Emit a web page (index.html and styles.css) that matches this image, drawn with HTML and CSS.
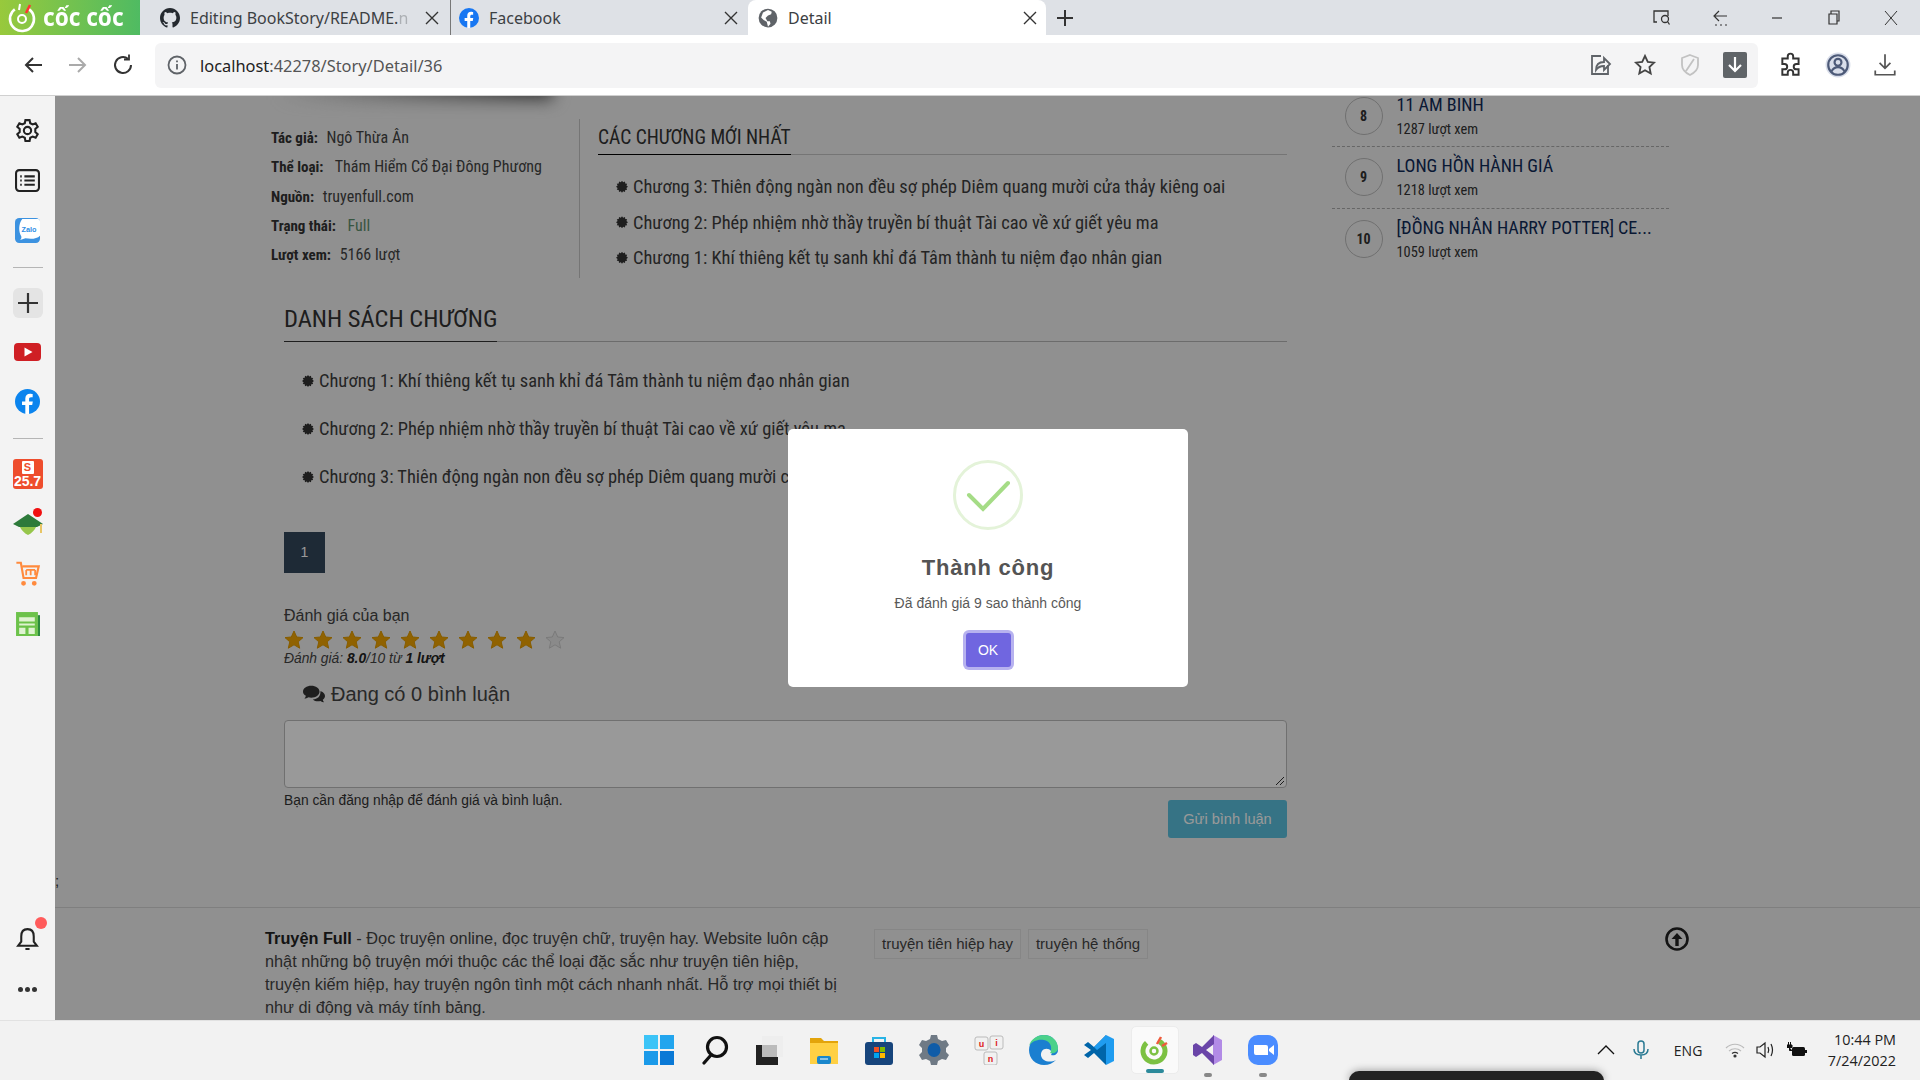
FILE: index.html
```html
<!DOCTYPE html>
<html lang="vi">
<head>
<meta charset="utf-8">
<title>Detail</title>
<link rel="stylesheet" href="styles.css">
</head>
<body>
<div class="tabs">
  <div class="brand">
    <svg class="brand-mark" width="32" height="33" viewBox="0 0 32 33"><circle cx="15" cy="18" r="12" fill="none" stroke="#fff" stroke-width="2.600" stroke-dasharray="60 16" transform="rotate(-55 15 18)"/><circle cx="15" cy="18" r="4" fill="none" stroke="#fff" stroke-width="2"/><path d="M19 12l4-8" stroke="#f33" stroke-width="2.500"/><path d="M12 9l1-6" stroke="#fff" stroke-width="2"/></svg>
    <span class="brand-name">cốc cốc</span>
  </div>
  <div class="tab t1">
    <svg class="fav" viewBox="0 0 16 16"><path fill="#24292f" d="M8 0C3.6 0 0 3.6 0 8c0 3.5 2.3 6.5 5.5 7.6.4.1.5-.2.5-.4v-1.4c-2.2.5-2.7-1-2.7-1-.4-.9-.9-1.2-.9-1.2-.7-.5.1-.5.1-.5.8.1 1.2.8 1.2.8.7 1.2 1.9.9 2.3.7.1-.5.3-.9.5-1.1-1.8-.2-3.6-.9-3.6-4 0-.9.3-1.6.8-2.1-.1-.2-.4-1 .1-2.1 0 0 .7-.2 2.2.8.6-.2 1.3-.3 2-.3s1.4.1 2 .3c1.5-1 2.2-.8 2.2-.8.4 1.1.2 1.9.1 2.1.5.6.8 1.3.8 2.1 0 3.1-1.9 3.7-3.7 3.9.3.3.6.8.6 1.5v2.2c0 .2.1.5.6.4C13.7 14.5 16 11.5 16 8c0-4.400-3.600-8-8-8z"/></svg>
    <span class="tab-title">Editing BookStory/README.<span class="fade">n</span></span>
    <svg class="close" viewBox="0 0 14 14" fill="none" stroke="#333" stroke-width="1.400"><path d="M1 1l12 12M13 1L1 13"/></svg>
  </div>
  <div class="tab t2">
    <svg class="fav" viewBox="0 0 16 16"><circle cx="8" cy="8" r="8" fill="#1877f2"/><path fill="#fff" d="M11 10.300l.4-2.300H9V6.500c0-.7.3-1.200 1.300-1.200h1V3.200S10.400 3 9.600 3C7.800 3 6.600 4.100 6.600 6.100V8H4.500v2.300h2.100V16h2.400v-5.700z"/></svg>
    <span class="tab-title">Facebook</span>
    <svg class="close" viewBox="0 0 14 14" fill="none" stroke="#333" stroke-width="1.400"><path d="M1 1l12 12M13 1L1 13"/></svg>
  </div>
  <div class="tab active">
    <svg class="fav" viewBox="0 0 16 16"><circle cx="8" cy="8" r="7.500" fill="#5f6368"/><path fill="#fff" d="M8 1.500l3 1.500-.5 2-2.500 1-2 2 1.500 2.500h2l.5 2-2 2.500-1-4-2.500-1.500-2-2 1.500-4z"/></svg>
    <span class="tab-title">Detail</span>
    <svg class="close" viewBox="0 0 14 14" fill="none" stroke="#333" stroke-width="1.400"><path d="M1 1l12 12M13 1L1 13"/></svg>
  </div>
  <div class="new-tab"><svg width="16" height="16" viewBox="0 0 16 16" stroke="#333" stroke-width="2"><path d="M8 0v16M0 8h16"/></svg></div>
  <div class="win-ctrls">
    <svg width="22" height="18" viewBox="0 0 22 18" fill="none" stroke="#333" stroke-width="1.300"><path d="M5 13H2V2h14v5"/><circle cx="13" cy="10" r="3.500"/><path d="M15.500 12.500l2 3"/></svg>
    <svg width="22" height="18" viewBox="0 0 22 18" fill="none" stroke="#333" stroke-width="1.200"><path d="M18 7H6M10 2L5 7l5 5M6 16h2M11 16h2M16 16h2"/></svg>
    <svg width="22" height="18" viewBox="0 0 22 18" fill="none" stroke="#333" stroke-width="1.200"><path d="M6 9h10"/></svg>
    <svg width="22" height="18" viewBox="0 0 22 18" fill="none" stroke="#333" stroke-width="1.200"><path d="M6 5h8v10H6zM8 5V2h8v10h-2"/></svg>
    <svg width="22" height="18" viewBox="0 0 22 18" fill="none" stroke="#333" stroke-width="1"><path d="M5 2l12 14M17 2L5 16"/></svg>
  </div>
</div>

<div class="toolbar">
  <svg class="nav" viewBox="0 0 24 24" fill="none" stroke="#333" stroke-width="2"><path d="M21 12H5M12 5l-7 7 7 7"/></svg>
  <svg class="nav" viewBox="0 0 24 24" fill="none" stroke="#aaa" stroke-width="2"><path d="M3 12h16M12 5l7 7-7 7"/></svg>
  <svg class="nav" viewBox="0 0 24 24" fill="none" stroke="#333" stroke-width="2"><path d="M20 12a8 8 0 1 1-3-6.200"/><path d="M18 1.500v5h-5" stroke-width="1.800"/></svg>
  <div class="omnibox">
    <svg class="info-i" viewBox="0 0 20 20" fill="none" stroke="#5f6368" stroke-width="1.800"><circle cx="10" cy="10" r="8.500"/><path d="M10 9v5.500M10 5.500v1.800"/></svg>
    <span class="url"><span class="host">localhost</span>:42278/Story/Detail/36</span>
    <div class="omni-icons">
      <svg class="oi" viewBox="0 0 24 24" fill="none" stroke="#5f6368" stroke-width="1.800"><path d="M13 3H4v18h16v-9"/><path d="M8 17c0-5 3-8 8-8V5l6 6-6 6v-4c-3 0-6 1-8 4z"/></svg>
      <svg class="oi" viewBox="0 0 24 24" fill="none" stroke="#444" stroke-width="1.800"><path d="M12 3l2.800 6 6.200.7-4.600 4.300 1.300 6.500L12 17.200 6.300 20.500l1.300-6.500L3 9.700 9.200 9z"/></svg>
      <svg class="oi" viewBox="0 0 24 24" fill="none" stroke="#c2c2c2" stroke-width="1.800"><path d="M12 2l8 3v7c0 5-4 8-8 10-4-2-8-5-8-10V5zM8 18L16 6"/></svg>
      <div class="dl-box"><svg width="16" height="18" viewBox="0 0 16 18" fill="none" stroke="#fff" stroke-width="2.200"><path d="M8 1v14M2 9l6 6 6-6"/></svg></div>
    </div>
  </div>
  <div class="tool-icons">
    <svg class="ti" viewBox="0 0 24 24" fill="none" stroke="#333" stroke-width="1.800"><path d="M9 4a2.500 2.500 0 0 1 5 0v2h5v5h-2a2.500 2.500 0 0 0 0 5h2v5h-5v-2a2.500 2.500 0 0 0-5 0v2H4v-5h2a2.500 2.500 0 0 0 0-5H4V6h5z"/></svg>
    <svg class="ti" viewBox="0 0 24 24" fill="none"><circle cx="12" cy="12" r="11.500" fill="#d9deea"/><circle cx="12" cy="12" r="9" stroke="#4d5a78" stroke-width="2"/><circle cx="12" cy="9.500" r="3.200" stroke="#4d5a78" stroke-width="2"/><path d="M6 18c1.500-3 3.500-4 6-4s4.500 1 6 4" stroke="#4d5a78" stroke-width="2"/></svg>
    <svg class="ti" viewBox="0 0 24 24" fill="none" stroke="#555" stroke-width="1.600"><path d="M12 2v13M7 10l5 5 5-5M3 17v4h18v-4"/></svg>
  </div>
</div>

<div class="workspace">
  <aside class="side">
    <div class="side-top">
      <svg class="si" viewBox="0 0 24 24" fill="none" stroke="#222" stroke-width="2"><circle cx="12" cy="12" r="3.500"/><path d="M10 2h4l.6 3 2.400 1.200 2.800-1.200 2 3.500-2.300 2v3l2.300 2-2 3.500-2.800-1.200-2.400 1.200-.6 3h-4l-.6-3L7 17.800 4.200 19l-2-3.500 2.300-2v-3l-2.300-2 2-3.500L7 6.200 9.400 5z"/></svg>
      <svg class="si" viewBox="0 0 24 24" fill="none" stroke="#222" stroke-width="2"><rect x="1" y="2" width="22" height="20" rx="3"/><path d="M9 8h10M9 12h10M9 16h10M5 8h1.500M5 12h1.500M5 16h1.500"/></svg>
      <svg class="si" viewBox="0 0 24 24"><rect width="24" height="24" rx="4" fill="#3c92e0"/><path fill="#fff" d="M7 1h15a2 2 0 0 1 2 2v14c-3 3-8 3.500-14 2.500L5 21c1-1 1.400-2.200 1-3.500C3.500 13.500 3 6 7 1z"/><text class="zalo" x="13.500" y="13.500" text-anchor="middle">Zalo</text></svg>
      <hr class="sep">
      <div class="plus"><svg width="22" height="22" viewBox="0 0 22 22" stroke="#333" stroke-width="2.200"><path d="M11 1v20M1 11h20"/></svg></div>
      <svg class="yt" viewBox="0 0 27 18"><rect width="27" height="18" rx="4" fill="#cf1f24"/><path d="M10.500 4.500l8 4.500-8 4.500z" fill="#fff"/></svg>
      <svg class="si" viewBox="0 0 16 16"><circle cx="8" cy="8" r="8" fill="#0b84ee"/><path fill="#fff" d="M11 10.300l.4-2.300H9V6.500c0-.7.3-1.200 1.300-1.200h1V3.200S10.400 3 9.600 3C7.800 3 6.600 4.100 6.600 6.100V8H4.500v2.300h2.100V16h2.400v-5.700z"/></svg>
      <hr class="sep">
      <div class="shopee"><span class="shopee-s">S</span><span class="shopee-n">25.7</span></div>
      <div class="hat">
        <svg class="hat-i" viewBox="0 0 30 26"><path d="M6 13c0 0 1 7 9 11 8-4 9-11 9-11z" fill="#96c64b"/><path d="M15 3L0 13l6 3h18l6-3z" fill="#2d7a3a"/><path d="M28 13v9" stroke="#e8c565" stroke-width="2"/></svg>
        <span class="red-dot"></span>
      </div>
      <svg class="cart" viewBox="0 0 28 28" fill="none" stroke="#ff8a3d" stroke-width="2.400"><path d="M1 2h5l3 17h14l3-13H8"/><path d="M12 16v-6M17 16v-6M22 16v-6M12 10h10" stroke-width="2"/><circle cx="9" cy="25" r="1.500" fill="#ff8a3d"/><circle cx="21" cy="25" r="1.500" fill="#ff8a3d"/></svg>
      <svg class="si" viewBox="0 0 24 24"><rect x="1" y="1" width="21" height="23" fill="#6cc24a"/><rect x="22" y="4" width="2" height="20" fill="#2b8a3e"/><path d="M4 6h15v4H4zM4 12h15v2H4zM4 16h6v6H4zM13 16h6v6h-6z" fill="#dff3d2"/></svg>
    </div>
    <div class="side-bottom">
      <div class="bell">
        <svg class="si" viewBox="0 0 24 24" fill="none" stroke="#222" stroke-width="2"><path d="M12 3c-4 0-6 3-6 7v5l-3 4h18l-3-4v-5c0-4-2-7-6-7zM10 22h4"/></svg>
        <span class="bell-dot"></span>
      </div>
      <div class="dots"><i></i><i></i><i></i></div>
    </div>
  </aside>

  <main class="page">
    <div class="cover-shadow"></div>
    <div class="page-body">
      <div class="content-row">
        <div class="col-main">
          <div class="detail-row">
            <div class="info">
              <p><b>Tác giả:</b> Ngô Thừa Ân</p>
              <p><b class="roomy">Thể loại:</b> Thám Hiểm Cổ Đại Đông Phương</p>
              <p><b>Nguồn:</b> truyenfull.com</p>
              <p><b class="roomy">Trạng thái:</b> <span class="full">Full</span></p>
              <p><b>Lượt xem:</b> 5166 lượt</p>
            </div>
            <div class="latest">
              <div class="head-small"><span>CÁC CHƯƠNG MỚI NHẤT</span></div>
              <ul class="ch-list tight">
                <li>Chương 3: Thiên động ngàn non đều sợ phép Diêm quang mười cửa thảy kiêng oai</li>
                <li>Chương 2: Phép nhiệm nhờ thầy truyền bí thuật Tài cao về xứ giết yêu ma</li>
                <li>Chương 1: Khí thiêng kết tụ sanh khỉ đá Tâm thành tu niệm đạo nhân gian</li>
              </ul>
            </div>
          </div>
          <div class="chapters">
            <div class="head-big"><span>DANH SÁCH CHƯƠNG</span></div>
            <ul class="ch-list wide">
              <li>Chương 1: Khí thiêng kết tụ sanh khỉ đá Tâm thành tu niệm đạo nhân gian</li>
              <li>Chương 2: Phép nhiệm nhờ thầy truyền bí thuật Tài cao về xứ giết yêu ma</li>
              <li>Chương 3: Thiên động ngàn non đều sợ phép Diêm quang mười cửa thảy kiêng oai</li>
            </ul>
            <div class="pager">1</div>
            <div class="rate-label">Đánh giá của bạn</div>
            <div class="stars">
              <svg class="star" viewBox="0 0 20 20"><path d="M10 1l2.700 6 6.300.6-4.800 4.200 1.500 6.400L10 14.800l-5.700 3.400 1.500-6.400L1 7.600 7.300 7z"/></svg>
              <svg class="star" viewBox="0 0 20 20"><path d="M10 1l2.700 6 6.300.6-4.800 4.200 1.500 6.400L10 14.800l-5.700 3.400 1.500-6.400L1 7.600 7.300 7z"/></svg>
              <svg class="star" viewBox="0 0 20 20"><path d="M10 1l2.700 6 6.300.6-4.800 4.200 1.500 6.400L10 14.800l-5.700 3.400 1.500-6.400L1 7.600 7.300 7z"/></svg>
              <svg class="star" viewBox="0 0 20 20"><path d="M10 1l2.700 6 6.300.6-4.800 4.200 1.500 6.400L10 14.800l-5.700 3.400 1.500-6.400L1 7.600 7.300 7z"/></svg>
              <svg class="star" viewBox="0 0 20 20"><path d="M10 1l2.700 6 6.300.6-4.800 4.200 1.500 6.400L10 14.800l-5.700 3.400 1.500-6.400L1 7.600 7.300 7z"/></svg>
              <svg class="star" viewBox="0 0 20 20"><path d="M10 1l2.700 6 6.300.6-4.800 4.200 1.500 6.400L10 14.800l-5.700 3.400 1.500-6.400L1 7.600 7.300 7z"/></svg>
              <svg class="star" viewBox="0 0 20 20"><path d="M10 1l2.700 6 6.300.6-4.800 4.200 1.500 6.400L10 14.800l-5.700 3.400 1.500-6.400L1 7.600 7.300 7z"/></svg>
              <svg class="star" viewBox="0 0 20 20"><path d="M10 1l2.700 6 6.300.6-4.800 4.200 1.500 6.400L10 14.800l-5.700 3.400 1.500-6.400L1 7.600 7.300 7z"/></svg>
              <svg class="star" viewBox="0 0 20 20"><path d="M10 1l2.700 6 6.300.6-4.800 4.200 1.500 6.400L10 14.800l-5.700 3.400 1.500-6.400L1 7.600 7.300 7z"/></svg>
              <svg class="star off" viewBox="0 0 20 20"><path d="M10 1l2.700 6 6.300.6-4.800 4.200 1.500 6.400L10 14.800l-5.700 3.400 1.500-6.400L1 7.600 7.300 7z"/></svg>
            </div>
            <div class="rate-text">Đánh giá: <b>8.0</b>/10 từ <b>1 lượt</b></div>
            <div class="comment-count">
              <svg class="cm-icon" viewBox="0 0 24 20"><path fill="#333" d="M9 1c5 0 9 2.800 9 6.500S14 14 9 14c-1 0-2-.1-3-.4C4.600 14.600 3 15 1.500 15c1-1 1.500-2 1.600-3C1.200 10.800 0 9.300 0 7.500 0 3.800 4 1 9 1z"/><path fill="#333" d="M19.500 7c2.700 1 4.500 3 4.500 5.200 0 1.600-.9 3-2.400 4 .1 1 .6 1.900 1.400 2.800-1.400 0-2.800-.4-4-1.300-.9.200-1.700.3-2.500.3-2.400 0-4.500-.8-5.800-2.100 5 0 8.800-3.600 8.300-8.900z"/></svg>
              <span>Đang có 0 bình luận</span>
            </div>
            <div class="textarea"><svg class="grip" width="10" height="10" viewBox="0 0 10 10" stroke="#333" stroke-width="1"><path d="M1 9l8-8M5 9l4-4"/></svg></div>
            <div class="form-foot">
              <span class="login-note">Bạn cần đăng nhập để đánh giá và bình luận.</span>
              <span class="send">Gửi bình luận</span>
            </div>
          </div>
        </div>
        <div class="col-side">
          <div class="rank"><span class="num">8</span><div class="rank-text"><span class="rank-name">11 AM BINH</span><span class="rank-views">1287 lượt xem</span></div></div>
          <div class="rank"><span class="num">9</span><div class="rank-text"><span class="rank-name">LONG HỒN HÀNH GIÁ</span><span class="rank-views">1218 lượt xem</span></div></div>
          <div class="rank last"><span class="num">10</span><div class="rank-text"><span class="rank-name">[ĐỒNG NHÂN HARRY POTTER] CE...</span><span class="rank-views">1059 lượt xem</span></div></div>
        </div>
      </div>
      <div class="semi">;</div>
      <footer class="foot">
        <p class="foot-text"><b>Truyện Full</b> - Đọc truyện online, đọc truyện chữ, truyện hay. Website luôn cập nhật những bộ truyện mới thuộc các thể loại đặc sắc như truyện tiên hiệp, truyện kiếm hiệp, hay truyện ngôn tình một cách nhanh nhất. Hỗ trợ mọi thiết bị như di động và máy tính bảng.</p>
        <div class="tags"><span class="tag">truyện tiên hiệp hay</span><span class="tag">truyện hệ thống</span></div>
        <svg class="up" viewBox="0 0 24 24" fill="none" stroke="#222" stroke-width="2.600"><circle cx="12" cy="12" r="10.500"/><path d="M12 19v-8" stroke-width="3.400"/><path d="M6.500 12L12 6l5.500 6z" fill="#222" stroke="none"/></svg>
      </footer>
    </div>
    <div class="overlay"></div>
    <div class="dialog">
      <svg class="check" width="70" height="70" viewBox="0 0 70 70" fill="none"><circle cx="35" cy="35" r="33.500" stroke="#e4f3d9" stroke-width="3"/><path d="M16 35l14 14 25-26" stroke="#a5dc86" stroke-width="4" stroke-linecap="round"/></svg>
      <h2 class="dlg-title">Thành công</h2>
      <p class="dlg-text">Đã đánh giá 9 sao thành công</p>
      <span class="ok">OK</span>
    </div>
  </main>
</div>

<div class="taskbar">
  <div class="task-icons">
    <svg class="app" viewBox="0 0 30 30"><path fill="#3cc4f7" d="M0 0h14v14H0z"/><path fill="#22a5ee" d="M16 0h14v14H16z"/><path fill="#1b9ae9" d="M0 16h14v14H0z"/><path fill="#0a79d6" d="M16 16h14v14H16z"/></svg>
    <svg class="app" viewBox="0 0 30 30" fill="none" stroke="#111" stroke-width="3.200"><circle cx="18" cy="12" r="9.500"/><path d="M12 20l-7 8" stroke-linecap="round"/></svg>
    <svg class="app" viewBox="0 0 30 30"><rect x="2" y="10" width="22" height="20" fill="#222"/><rect x="8" y="1" width="21" height="21" fill="#eee"/><rect x="8" y="10" width="15" height="12" fill="#bbb"/></svg>
    <svg class="app" viewBox="0 0 30 30"><path fill="#e3a40b" d="M1 3h11l3 3h14v6H1z"/><path fill="#ffd043" d="M1 8h28v21H1z"/><rect x="8" y="21" width="14" height="8" rx="2" fill="#1a87cc"/><path d="M11 24h8" stroke="#fff"/></svg>
    <svg class="app" viewBox="0 0 30 30"><path d="M9 7V3h12v4" fill="none" stroke="#28b4e6" stroke-width="2"/><rect x="1" y="7" width="28" height="23" rx="3" fill="#17457c"/><path fill="#f25022" d="M10 12h5v5h-5z"/><path fill="#7fba00" d="M16 12h5v5h-5z"/><path fill="#00a4ef" d="M10 18h5v5h-5z"/><path fill="#ffb900" d="M16 18h5v5h-5z"/></svg>
    <svg class="app" viewBox="0 0 30 30"><path fill="#6f7a85" d="M12 0h6l1 4 4 2 4-1 3 5-3 3v4l3 3-3 5-4-1-4 2-1 4h-6l-1-4-4-2-4 1-3-5 3-3v-4L0 10l3-5 4 1 4-2z"/><ellipse cx="15" cy="15" rx="6.500" ry="7" fill="#0f5ca8"/></svg>
    <svg class="app" viewBox="0 0 30 30"><g fill="#f1f1f1" stroke="#bbb"><rect x="1" y="2" width="13" height="13" rx="2"/><rect x="16" y="1" width="13" height="13" rx="2"/><rect x="10" y="17" width="13" height="13" rx="2"/></g><g class="uin"><text x="7.500" y="12">u</text><text x="22.500" y="11">i</text><text x="16.500" y="27">n</text></g></svg>
    <svg class="app" viewBox="0 0 30 30"><path fill="#1b7fd0" d="M15 0a15 15 0 0 0-15 15c0 8.500 6.500 15 15 15 5 0 9-2 12-5-4 2-9 2-12 0-3-2-4-6-2-9 2-3 7-3 9 0 1 1 1 3 0 4 4 1 7-1 7-5C29 6 23 0 15 0z"/><path fill="#4bd18a" d="M15 0C8 0 2 4 0 11c3-5 9-7 15-6 5 1 8 5 7 10 0 1 0 2-1 3 4 1 8-1 8-5C29 6 23 0 15 0z"/></svg>
    <svg class="app" viewBox="0 0 30 30"><path fill="#0065a9" d="M22 0L10 12 4 7 0 10l7 5-7 5 4 3 6-5 12 12z"/><path fill="#1f9cf0" d="M22 0l8 4v22l-8 4V8l-9 7-3-3z"/></svg>
    <div class="active-app"><svg class="app" viewBox="0 0 30 30" fill="none"><circle cx="14" cy="16" r="11" stroke="#7cc142" stroke-width="5" stroke-dasharray="55 14" transform="rotate(-60 14 16)"/><circle cx="14" cy="16" r="3.500" stroke="#7cc142" stroke-width="2.500"/><path d="M17 9l4-7M22 11l5-3" stroke="#ef5a3c" stroke-width="2.500"/></svg><i class="bar"></i></div>
    <div class="running"><svg class="app" viewBox="0 0 30 30"><path fill="#b28be6" d="M20 0l9 5v20l-9 5z"/><path fill="#6a45a8" d="M21 0L9 12 3 8 0 10v10l3 2 6-4 12 12v-9l-8-6 8-6z"/></svg><i class="pip"></i></div>
    <div class="running"><svg class="app" viewBox="0 0 30 30"><rect width="30" height="30" rx="10" fill="#4a8cff"/><path fill="#fff" d="M6 10h12a2 2 0 0 1 2 2v8H8a2 2 0 0 1-2-2zM21 14l5-4v10l-5-4z"/></svg><i class="pip"></i></div>
  </div>
  <div class="tray">
    <svg class="t-i caret" viewBox="0 0 20 20" fill="none" stroke="#111" stroke-width="1.300"><path d="M2 14l8-8 8 8"/></svg>
    <svg class="t-i" viewBox="0 0 20 20" fill="none" stroke="#2a7a93" stroke-width="1.500"><rect x="7" y="1" width="6" height="12" rx="3"/><path d="M3 9c0 4 3 6 7 6s7-2 7-6M10 15v4"/></svg>
    <span class="lang">ENG</span>
    <svg class="t-i wifi" viewBox="0 0 20 20" fill="none" stroke="#333" stroke-width="1.200"><path d="M1 8c5-5 13-5 18 0M4 11c3.500-3 8.500-3 12 0" stroke="#bbb"/><path d="M7 13.500c2-1.500 4-1.500 6 0"/><circle cx="10" cy="16" r="1" fill="#111"/></svg>
    <svg class="t-i" viewBox="0 0 20 20" fill="none" stroke="#222" stroke-width="1.200"><path d="M2 7h3l5-4v14l-5-4H2zM13 7c1 2 1 4 0 6M16 4c2 4 2 8 0 12"/></svg>
    <svg class="t-i" viewBox="0 0 20 20"><rect x="5" y="7" width="13" height="9" rx="1.500" fill="#111"/><path d="M18 10h2v3h-2z" fill="#111"/><path d="M1.500 2v3M3.500 2v3M0 5h5v2.500H0zM2.500 7.500v3h3" stroke="#111" fill="#111"/></svg>
    <div class="clock"><span>10:44 PM</span><span>7/24/2022</span></div>
  </div>
  <div class="peek"></div>
</div>
</body>
</html>
```
FILE: styles.css
```css
* { box-sizing: border-box; }
html, body { margin: 0; height: 100%; }
body { width: 1920px; height: 1080px; overflow: hidden; display: flex; flex-direction: column; background: #fff; font-family: "Liberation Sans", Arial, sans-serif; color: #333; }

.tabs { height: 35px; flex: none; display: flex; background: #dee1e6; font-family: "Noto Sans", sans-serif; }
.brand { width: 140px; height: 35px; padding-left: 7px; display: flex; align-items: center; background: linear-gradient(90deg, #98c93c, #4fbb62); color: #fff; overflow: hidden; }
.brand-mark { flex: none; margin-right: 4px; }
.brand-name { font: 700 24.500px/1 "Noto Sans", sans-serif; transform: scaleX(.92); transform-origin: left; white-space: nowrap; }
.tab { height: 35px; display: flex; align-items: center; font-size: 16px; color: #3c4043; }
.t1 { width: 310px; padding: 0 11px 0 20px; }
.t2 { width: 298px; padding: 0 10px 0 8px; border-left: 1px solid #777; }
.active { width: 298px; padding: 0 9px 0 10px; background: #fff; border-radius: 8px 8px 0 0; }
.fav { width: 20px; height: 20px; flex: none; margin-right: 10px; }
.tab-title { white-space: nowrap; flex: 1; overflow: hidden; }
.fade { opacity: .3; }
.close { width: 14px; height: 14px; flex: none; }
.new-tab { width: 36px; display: flex; align-items: center; justify-content: center; padding-left: 2px; }
.win-ctrls { margin-left: auto; display: flex; gap: 35px; align-items: center; padding-right: 18px; }

.toolbar { height: 61px; flex: none; display: flex; align-items: center; padding: 0 22px 0 21px; background: #fff; border-bottom: 1px solid #d0d0d0; }
.nav { width: 24px; height: 24px; margin-right: 21px; flex: none; }
.nav:nth-child(3) { margin-right: 20px; }
.omnibox { width: 1603px; height: 45px; flex: none; display: flex; align-items: center; padding: 0 11px 0 12px; background: #f4f4f5; border-radius: 6px; }
.info-i { width: 20px; height: 20px; flex: none; margin-right: 13px; }
.url { font: 400 16.400px "Noto Sans", sans-serif; color: #555; }
.host { color: #222; }
.omni-icons { margin-left: auto; display: flex; align-items: center; gap: 21px; }
.oi { width: 24px; height: 24px; }
.dl-box { width: 24px; height: 26px; background: #606468; border-radius: 2px; display: flex; align-items: center; justify-content: center; }
.tool-icons { margin-left: auto; display: flex; gap: 21px; }
.ti { width: 26px; height: 26px; }

.workspace { flex: 1; min-height: 0; display: flex; }
.side { width: 55px; flex: none; background: #f3f3f3; display: flex; flex-direction: column; justify-content: space-between; padding: 22px 0 28px; }
.side-top { display: flex; flex-direction: column; align-items: center; gap: 25px; }
.side-bottom { display: flex; flex-direction: column; align-items: center; gap: 36px; }
.si { width: 25px; height: 25px; display: block; }
.yt { width: 27px; height: 18px; display: block; margin: 3px 0; }
.zalo { font: 700 7px "Liberation Sans", sans-serif; fill: #2f8ee5; }
.uin { font: 700 9px "Liberation Sans", sans-serif; fill: #d22; text-anchor: middle; }
.sep { width: 30px; height: 1px; margin: -1px 0; border: 0; background: #b5b5b5; }
.plus { width: 30px; height: 30px; margin: -4px 0 -3px; background: #e4e4e4; border-radius: 6px; display: flex; align-items: center; justify-content: center; }
.shopee { width: 30px; height: 30px; margin: -4px 0 -3px; background: #ee4d2d; border-radius: 3px; color: #fff; display: flex; flex-direction: column; align-items: center; font-weight: 700; line-height: 1; overflow: hidden; }
.shopee-s { width: 12px; height: 13px; margin-top: 2px; background: #fff; color: #ee4d2d; font-size: 11px; line-height: 13px; text-align: center; border-radius: 1px; }
.shopee-n { font-size: 14px; white-space: nowrap; }
.hat { position: relative; height: 25px; }
.hat-i { width: 30px; height: 26px; display: block; }
.cart { width: 28px; height: 25px; display: block; }
.red-dot { position: absolute; right: 1px; top: -3px; width: 9px; height: 9px; border-radius: 50%; background: #f01010; }
.bell { position: relative; }
.bell-dot { position: absolute; right: -7px; top: -9px; width: 12px; height: 12px; border-radius: 50%; background: #ff5b5b; }
.dots { display: flex; gap: 2px; }
.dots i { width: 5px; height: 5px; border-radius: 50%; background: #333; }

.page { flex: 1; min-width: 0; position: relative; overflow: hidden; background: #f0f0f0; }
.cover-shadow { position: absolute; left: 222px; top: -20px; width: 276px; height: 24px; background: linear-gradient(90deg, transparent, #aaa 45%, #666 90%); filter: blur(8px); }
.page-body { height: 100%; display: flex; flex-direction: column; font-family: Roboto, sans-serif; }
.content-row { display: flex; padding-left: 217px; height: 767px; }
.col-main { width: 1015px; flex: none; padding-top: 23px; font-stretch: condensed; }
.detail-row { display: flex; height: 159px; }
.info { width: 308px; height: 159px; flex: none; padding-top: 4px; border-right: 1px solid #c4c4c4; font-size: 16px; }
.info p { margin: 0 0 0 -1px; height: 29.300px; line-height: 29.300px; color: #444; white-space: nowrap; }
.info b { font-size: 15px; color: #333; margin-right: 5px; }
.info b.roomy { margin-right: 8px; }
.full { color: #5c8e6c; }
.latest { flex: 1; padding-left: 18px; }
.head-small { height: 36px; border-bottom: 1px solid #c4c4c4; font-size: 19.500px; line-height: 37px; color: #333; }
.head-small span { display: inline-block; height: 36px; border-bottom: 1px solid #000; }
.ch-list { list-style: none; margin: 0; padding: 0; }
.ch-list li { white-space: nowrap; position: relative; font-size: 18.400px; color: #3d3d3d; }
.ch-list li::before { content: ""; position: absolute; left: -17px; top: 50%; width: 12px; height: 12px; margin-top: -6px; background: #333; clip-path: polygon(50% 0, 59.800% 13.300%, 75% 6.700%, 76.900% 23.100%, 93.300% 25%, 86.700% 40.200%, 100% 50%, 86.700% 59.800%, 93.300% 75%, 76.900% 76.900%, 75% 93.300%, 59.800% 86.700%, 50% 100%, 40.200% 86.700%, 25% 93.300%, 23.100% 76.900%, 6.700% 75%, 13.300% 59.800%, 0 50%, 13.300% 40.200%, 6.700% 25%, 23.100% 23.100%, 25% 6.700%, 40.200% 13.300%); }
.tight { padding: 14px 0 0 35px; }
.tight li { height: 35.500px; line-height: 35.500px; }
.chapters { margin-left: 12px; padding-top: 23px; }
.head-big { height: 41px; border-bottom: 1px solid #b4b4b4; font-size: 24.500px; line-height: 35px; color: #333; }
.head-big span { display: inline-block; height: 41px; border-bottom: 1px solid #333; }
.wide { padding: 15px 0 0 35px; }
.wide li { height: 48px; line-height: 48px; font-size: 18.450px; }
.pager { width: 41px; height: 41px; margin-top: 31px; background: #33475b; color: #fff; font: 400 14px/41px "Liberation Sans", sans-serif; text-align: center; }
.rate-label { margin-top: 34px; font: 400 16px/18px "Liberation Sans", sans-serif; color: #444; }
.stars { display: flex; gap: 9px; margin-top: 5px; height: 20px; }
.star { width: 20px; height: 20px; fill: #f0a400; stroke: #e09a00; flex: none; }
.star.off { fill: #e6e6e6; stroke: #ccc; }
.rate-text { font: italic 400 13.800px/16px "Liberation Sans", sans-serif; color: #444; margin-top: 1px; }
.rate-text b { color: #222; }
.comment-count { display: flex; align-items: center; gap: 6px; padding-left: 19px; margin-top: 13.500px; height: 26px; font: 400 20px/26px "Liberation Sans", sans-serif; color: #444; }
.cm-icon { width: 22px; height: 20px; }
.textarea { position: relative; height: 68px; margin-top: 13px; background: #fff; border: 1px solid #bbb; border-radius: 4px; }
.grip { position: absolute; right: 1px; bottom: 1px; }
.form-foot { display: flex; justify-content: space-between; align-items: flex-start; margin-top: 4px; }
.login-note { font: 400 13.800px/18px "Liberation Sans", sans-serif; color: #333; }
.send { margin-top: 8px; width: 119px; height: 38px; background: #5bc0de; color: #fff; border-radius: 3px; font: 400 14.600px/38px "Liberation Sans", sans-serif; text-align: center; }
.col-side { width: 337px; margin-left: 44.500px; font-stretch: condensed; margin-top: -10.500px; }
.rank { display: flex; align-items: center; height: 61.500px; border-bottom: 1px dashed #aaa; padding-left: 13px; gap: 14px; }
.rank.last { border-bottom: 0; }
.num { width: 38px; height: 38px; flex: none; border: 1px solid #bbb; border-radius: 50%; font: 700 14px/36px Roboto, sans-serif; font-stretch: condensed; text-align: center; color: #333; }
.rank-text { display: flex; flex-direction: column; padding-top: 2px; }
.rank-name { font-size: 18.100px; line-height: 26px; color: #0f2a57; white-space: nowrap; }
.rank-views { font-size: 14.400px; line-height: 24px; color: #333; }
.semi { height: 44px; flex: none; padding-top: 8px; color: #333; font: 400 15px/20px "Liberation Sans", sans-serif; }
.foot { flex: 1; border-top: 1px solid #d4d4d4; display: flex; align-items: flex-start; padding: 19px 0 0 210px; }
.foot-text { width: 575px; margin: 0; font: 400 16.300px/23px "Liberation Sans", sans-serif; color: #444; flex: none; }
.foot-text b { color: #222; }
.tags { margin-left: 34px; display: flex; gap: 7px; margin-top: 2px; }
.tag { height: 30px; padding: 0 7px; border: 1px solid #e0e0e0; font: 400 15px/28px "Liberation Sans", sans-serif; color: #444; white-space: nowrap; }
.up { width: 24px; height: 24px; position: absolute; left: 1610px; top: 831px; }

.overlay { position: absolute; inset: 0; background: rgba(0,0,0,.4); }
.dialog { position: absolute; left: 733px; top: 333px; width: 400px; height: 258px; background: #fff; border-radius: 5px; display: flex; flex-direction: column; align-items: center; padding-top: 31px; }
.check { display: block; flex: none; }
.dlg-title { margin: 25px 0 0; font: 700 22px/26px "Liberation Sans", sans-serif; letter-spacing: .8px; color: #545454; }
.dlg-text { margin: 14px 0 0; font: 400 14px/16px "Liberation Sans", sans-serif; color: #595959; }
.ok { width: 45px; height: 34px; margin-top: 22px; background: #7066e0; border-radius: 3px; color: #fff; font: 400 14px/34px "Liberation Sans", sans-serif; text-align: center; box-shadow: 0 0 0 3px rgba(112,102,224,.5); }

.taskbar { height: 60px; flex: none; position: relative; display: flex; align-items: center; background: #f2f2f2; border-top: 1px solid #e2e2e2; }
.task-icons { position: absolute; left: 644px; top: 0; height: 58px; display: flex; align-items: center; }
.app { width: 30px; height: 30px; flex: none; display: block; }
.task-icons > .app { margin: 0 12.500px; }
.task-icons > .app:first-child { margin-left: 0; }
.active-app { width: 48px; height: 48px; margin: 0 2px 0 4px; background: #fafafa; border: 1px solid #ececec; border-radius: 5px; display: flex; align-items: center; justify-content: center; position: relative; }
.bar { position: absolute; left: 14px; bottom: 0; width: 18px; height: 4px; border-radius: 2px; background: #2c8a9b; }
.running { position: relative; width: 55px; display: flex; justify-content: center; }
.pip { position: absolute; left: 23px; top: 38px; width: 8px; height: 4px; border-radius: 2px; background: #888; }
.tray { position: absolute; right: 24px; top: 0; height: 58px; display: flex; align-items: center; gap: 12px; }
.t-i { width: 20px; height: 20px; flex: none; }
.caret { margin-right: 3px; }
.wifi { margin-right: -2.500px; }
.lang { font: 400 14px "Open Sans", sans-serif; color: #222; margin: 0 11px 0 11px; }
.clock { display: flex; flex-direction: column; align-items: flex-end; font: 400 14.400px/21px "Open Sans", sans-serif; color: #222; margin-left: 9px; }
.peek { position: absolute; left: 1349px; top: 50px; width: 255px; height: 10px; background: #222; border-radius: 10px 10px 0 0; box-shadow: 0 0 8px rgba(0,0,0,.4); }
```
